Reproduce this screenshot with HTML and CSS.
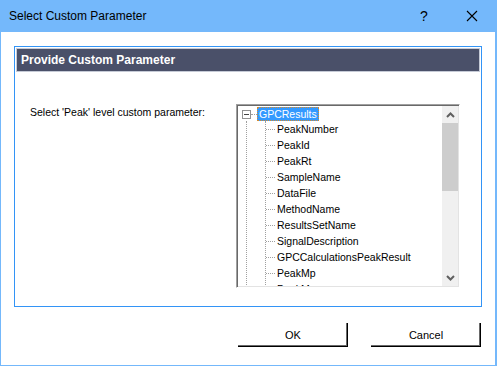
FILE: index.html
```html
<!DOCTYPE html>
<html lang="en">
<head>
    <meta charset="UTF-8">
    <title>Select Custom Parameter</title>
    <link rel="stylesheet" href="styles.css">
</head>
<body>
    <div class="window">
        <div class="titlebar">
            <span class="title">Select Custom Parameter</span>
            <span class="help">?</span>
            <span class="close">
                <svg width="12" height="12" viewBox="0 0 12 12">
                    <path d="M1 1 L11 11 M11 1 L1 11" stroke="#000" stroke-width="1.1" fill="none"/>
                </svg>
            </span>
        </div>

        <div class="content">
            <div class="panel">
                <div class="panel-header">Provide Custom Parameter</div>
                <div class="panel-body">
                    <label class="field-label">Select 'Peak' level custom parameter:</label>
                    <div class="tree-box">
                        <div class="tree">
                            <div class="root-row">
                                <span class="expander"></span>
                                <span class="branch"></span>
                                <span class="node selected">GPCResults</span>
                            </div>
                            <div class="children">
                                <ul class="leaves">
                                    <li>PeakNumber</li>
                                    <li>PeakId</li>
                                    <li>PeakRt</li>
                                    <li>SampleName</li>
                                    <li>DataFile</li>
                                    <li>MethodName</li>
                                    <li>ResultsSetName</li>
                                    <li>SignalDescription</li>
                                    <li>GPCCalculationsPeakResult</li>
                                    <li>PeakMp</li>
                                    <li>PeakMn</li>
                                </ul>
                            </div>
                        </div>
                        <div class="scrollbar">
                            <div class="scroll-btn">
                                <svg width="9" height="6" viewBox="0 0 9 6"><path d="M1 5 L4.5 1.5 L8 5" stroke="#606060" stroke-width="2" fill="none"/></svg>
                            </div>
                            <div class="scroll-track">
                                <div class="scroll-thumb"></div>
                            </div>
                            <div class="scroll-btn">
                                <svg width="9" height="6" viewBox="0 0 9 6"><path d="M1 1 L4.5 4.5 L8 1" stroke="#606060" stroke-width="2" fill="none"/></svg>
                            </div>
                        </div>
                    </div>
                </div>
            </div>

            <div class="buttons">
                <button class="btn">OK</button>
                <button class="btn">Cancel</button>
            </div>
        </div>
    </div>
</body>
</html>
```

FILE: styles.css
```css
body {
    margin: 0;
    background-color: #fff;
    font-family: "Liberation Sans", Arial, sans-serif;
}
.window {
    width: 497px;
    height: 366px;
    box-sizing: border-box;
    border: 1px solid #74b8fb;
    border-top: none;
    border-right-width: 2px;
    background-color: #fff;
}
.titlebar {
    height: 32px;
    margin: 0 -2px 0 -1px;
    background-color: #74b8fb;
    display: flex;
    align-items: center;
    padding-left: 9px;
}
.title {
    font-size: 12px;
    color: #000;
    flex: 1;
}
.help {
    font-size: 14px;
    width: 20px;
    margin-right: 26px;
}
.close {
    width: 14px;
    margin-right: 17px;
    display: flex;
}
.content {
    padding: 14px 13px 0 13px;
}
.panel {
    height: 261px;
    box-sizing: border-box;
    border: 1px solid #3394f6;
}
.panel-header {
    margin: 1px 1px 0 1px;
    height: 24px;
    box-sizing: border-box;
    border: 1px solid #c5cad6;
    background-color: #4a5069;
    color: #fff;
    font-weight: bold;
    font-size: 12px;
    display: flex;
    align-items: center;
    padding-left: 4px;
}
.panel-body {
    display: flex;
    padding: 32px 0 0 15px;
}
.field-label {
    width: 206px;
    font-size: 10.5px;
    color: #000;
    line-height: 16px;
}
.tree-box {
    width: 224px;
    height: 184px;
    box-sizing: border-box;
    border: 1px solid;
    border-color: #a0a0a0 #fff #fff #a0a0a0;
    box-shadow: inset 1px 1px 0 #696969, inset -1px -1px 0 #e3e3e3;
    padding: 1px;
    display: flex;
    overflow: hidden;
}
.tree {
    flex: 1;
    padding-left: 4px;
    font-size: 10.5px;
    color: #000;
    overflow: hidden;
}
.root-row {
    height: 16px;
    display: flex;
    align-items: center;
}
.expander {
    width: 9px;
    height: 9px;
    box-sizing: border-box;
    border: 1px solid #919191;
    background: linear-gradient(#444, #444) center / 5px 1px no-repeat;
}
.branch {
    width: 6px;
    border-top: 1px dotted #a0a0a0;
}
.node {
    padding: 0 1px;
    line-height: 12px;
    border: 1px dotted transparent;
}
.selected {
    background-color: #3399ff;
    color: #fff;
    border-color: #d78a2a;
}
.children {
    margin-left: 4px;
    border-left: 1px dotted #a0a0a0;
}
.leaves {
    list-style: none;
    margin: 0 0 0 18px;
    padding: 0;
    border-left: 1px dotted #a0a0a0;
}
.leaves li {
    height: 16px;
    display: flex;
    align-items: center;
    white-space: nowrap;
    margin-top: -1px;
    margin-bottom: 1px;
}
.leaves li::before {
    content: '';
    width: 9px;
    border-top: 1px dotted #a0a0a0;
    margin-right: 2px;
}
.scrollbar {
    width: 16px;
    background-color: #f0f0f0;
    display: flex;
    flex-direction: column;
}
.scroll-btn {
    height: 17px;
    display: flex;
    align-items: center;
    justify-content: center;
}
.scroll-track {
    flex: 1;
}
.scroll-thumb {
    height: 68px;
    background-color: #cdcdcd;
}
.buttons {
    display: flex;
    justify-content: flex-end;
    gap: 23px;
    padding: 16px 1px 0 0;
}
.btn {
    width: 110px;
    height: 24px;
    background-color: #fff;
    border: none;
    box-shadow: inset -1px -1px 0 #000, inset -2px -2px 0 #696969;
    font-family: "Liberation Sans", Arial, sans-serif;
    font-size: 11px;
    color: #000;
    padding: 0;
}
```
